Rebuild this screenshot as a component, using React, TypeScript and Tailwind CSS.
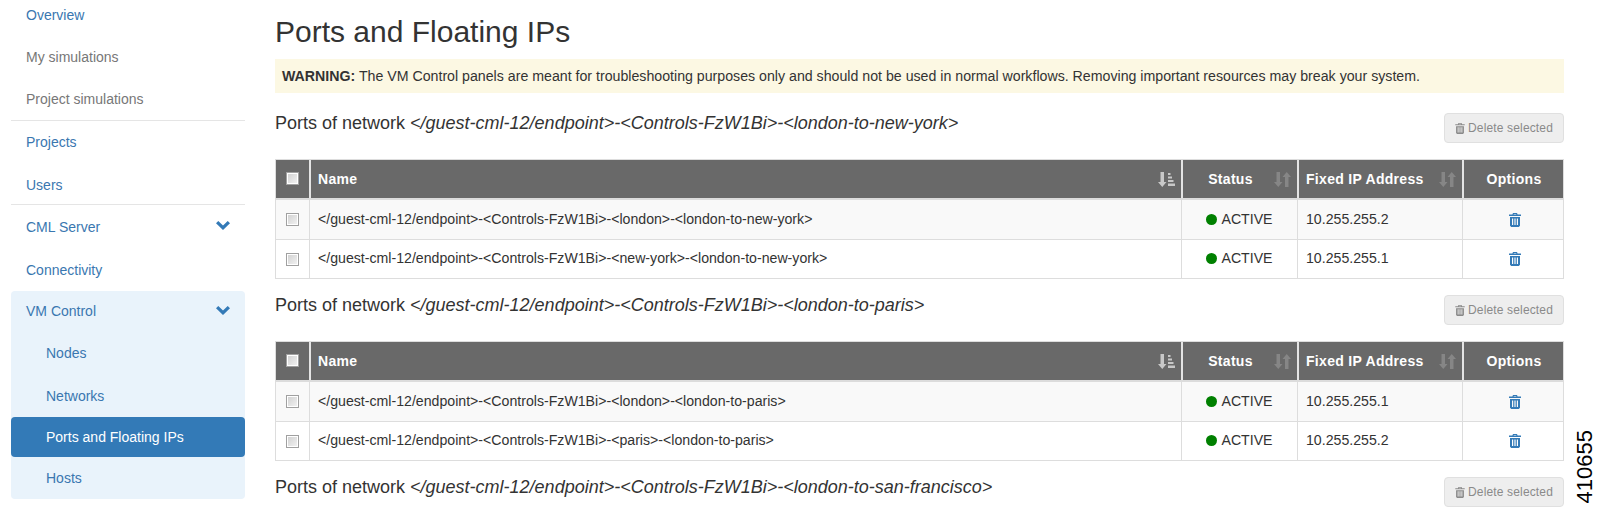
const NET = "</guest-cml-12/endpoint>-<Controls-FzW1Bi>-";

const SECTIONS = [
  {
    name: `${NET}<london-to-new-york>`,
    rows: [
      { name: `${NET}<london>-<london-to-new-york>`, ip: "10.255.255.2" },
      { name: `${NET}<new-york>-<london-to-new-york>`, ip: "10.255.255.1" },
    ],
  },
  {
    name: `${NET}<london-to-paris>`,
    rows: [
      { name: `${NET}<london>-<london-to-paris>`, ip: "10.255.255.1" },
      { name: `${NET}<paris>-<london-to-paris>`, ip: "10.255.255.2" },
    ],
  },
  { name: `${NET}<london-to-san-francisco>`, rows: [] },
];

function TrashIcon({ className }: { className?: string }) {
  return (
    <svg viewBox="0 0 12 14" className={className} fill="currentColor">
      <path fillRule="evenodd" d="M4 0h4l.6 1.500H12V3H0V1.500h3.400zM4.800 1l-.2.500h2.800L7.200 1z" />
      <path fillRule="evenodd" d="M1 4h10v8.800L9.800 14H2.200L1 12.800zM3 5.500v6.500h1.200V5.500zm2.400 0v6.500h1.200V5.500zm2.400 0v6.500H9V5.500z" />
    </svg>
  );
}

function SortIcon({ active }: { active?: boolean }) {
  if (active) {
    return (
      <svg viewBox="0 0 17 15" className="h-[15px] w-[17px] text-[#c8c8c8]" fill="currentColor">
        <path d="M2.500 0h3.500v10h2.500L4.250 15 0 10h2.500z" />
        <path d="M10 1h2.500v2H10zM10 4.500h4v2h-4zM10 8h5.500v2H10zM10 11.500h7v2.500h-7z" />
      </svg>
    );
  }
  return (
    <svg viewBox="0 0 17 15" className="h-[15px] w-[17px] text-[#868686]" fill="currentColor">
      <path d="M2.500 0h3.500v10h2.500L4.250 15 0 10h2.500z" />
      <path d="M11 15h3.500V5H17L12.750 0 8.500 5H11z" />
    </svg>
  );
}

function Chevron() {
  return (
    <svg viewBox="0 0 14 9" className="-mt-[3px] h-[9px] w-[14px] text-[#337ab7]" fill="currentColor">
      <path d="M0 2.300 2.300 0 7 4.500 11.700 0 14 2.300 7 9z" />
    </svg>
  );
}

function NavItem({
  label,
  height = "h-[42px]",
  sub,
  gray,
  active,
  chevron,
}: {
  label: string;
  height?: string;
  sub?: boolean;
  gray?: boolean;
  active?: boolean;
  chevron?: boolean;
}) {
  return (
    <div
      className={`flex ${height} items-center justify-between rounded pr-[15px] ${sub ? "pl-[35px]" : "pl-[15px]"} ${
        active ? "bg-[#337ab7] text-white" : gray ? "text-[#777]" : "text-[#3a77b0]"
      }`}
    >
      <span>{label}</span>
      {chevron && <Chevron />}
    </div>
  );
}

function Checkbox() {
  return <div className="h-[13px] w-[13px] border border-[#a0a0a0] bg-gradient-to-br from-[#cfcfcf] to-[#f4f4f4] shadow-[inset_0_0_0_1px_#fff]" />;
}

function HeadCell({ label, width, center, icon }: { label: string; width: string; center?: boolean; icon?: React.ReactNode }) {
  return (
    <div className={`flex ${width} items-center justify-between border-l-2 border-[#e4e4e4] pl-[7px] pr-[6px]`}>
      <span className={`pt-px ${center ? "flex-1 text-center" : ""} ${center && icon ? "pr-[3px]" : ""}`}>{label}</span>
      {icon}
    </div>
  );
}

function PortsSection({ name, rows }: { name: string; rows: { name: string; ip: string }[] }) {
  return (
    <section className="h-[182px]">
      <div className="flex h-[66px] items-start justify-between">
        <h3 className="pt-[20px] text-[18px] leading-[20px] text-[#333]">
          Ports of network <em>{name}</em>
        </h3>
        <button className="mt-[20px] flex h-[30px] w-[120px] items-center justify-center gap-[3px] rounded border border-[#e0e0e0] bg-[#eeeeee] text-[12px] tracking-[0.15px] text-[#8a8a8a]">
          <TrashIcon className="h-[11px] w-[10px]" />
          Delete selected
        </button>
      </div>
      {rows.length > 0 && (
        <div className="border border-[#ddd] text-[14.15px] text-[#333]">
          <div className="flex h-[40px] border-b-2 border-[#dcdcdc] bg-[#696969] text-[14px] font-bold tracking-[0.3px] text-white">
            <div className="flex w-[33px] items-center justify-center pb-[2px]">
              <Checkbox />
            </div>
            <HeadCell label="Name" width="flex-1" icon={<SortIcon active />} />
            <HeadCell label="Status" width="w-[116px]" center icon={<SortIcon />} />
            <HeadCell label="Fixed IP Address" width="w-[165px]" icon={<SortIcon />} />
            <HeadCell label="Options" width="w-[101px]" center />
          </div>
          {rows.map((r, i) => (
            <div key={r.name} className={`flex h-[39px] ${i === 0 ? "bg-[#f9f9f9]" : "border-t border-[#ddd]"}`}>
              <div className="flex w-[33px] items-center justify-center">
                <Checkbox />
              </div>
              <div className={`flex flex-1 items-center border-l border-[#ddd] px-2 ${i > 0 ? "pb-px" : ""}`}>{r.name}</div>
              <div className={`flex w-[116px] items-center justify-center gap-[4px] border-l border-[#ddd] ${i > 0 ? "pb-px" : ""}`}>
                <span className="h-[11px] w-[11px] rounded-full bg-[#008000]" />
                ACTIVE
              </div>
              <div className={`flex w-[165px] items-center border-l border-[#ddd] px-2 ${i > 0 ? "pb-px" : ""}`}>{r.ip}</div>
              <div className="flex w-[101px] items-center justify-center border-l border-[#ddd] pl-1">
                <TrashIcon className="h-[14px] w-[12px] text-[#337ab7]" />
              </div>
            </div>
          ))}
        </div>
      )}
    </section>
  );
}

export default function App() {
  return (
    <div className="relative flex h-[509px] overflow-hidden bg-white font-['Liberation_Sans',Arial,sans-serif] text-[14px]">
      {/* Sidebar */}
      <nav className="ml-[11px] w-[234px] shrink-0 -mt-[6px]">
        <NavItem label="Overview" />
        <NavItem label="My simulations" gray />
        <NavItem label="Project simulations" gray />
        <div className="border-t border-[#e5e5e5]" />
        <NavItem label="Projects" />
        <NavItem label="Users" height="h-[41px] pt-[3px]" />
        <div className="border-t border-[#e5e5e5]" />
        <NavItem label="CML Server" height="h-[44px]" chevron />
        <NavItem label="Connectivity" />
        <div className="rounded bg-[#e9f3fb]">
          <NavItem label="VM Control" height="h-[41px]" chevron />
          <NavItem label="Nodes" height="h-[43px]" sub />
          <NavItem label="Networks" sub />
          <NavItem label="Ports and Floating IPs" height="h-[40px]" sub active />
          <NavItem label="Hosts" sub />
        </div>
      </nav>

      {/* Main */}
      <main className="ml-[30px] w-[1289px] shrink-0">
        <h1 className="h-[59px] pt-[14px] text-[30px] leading-[36px] text-[#333]">Ports and Floating IPs</h1>
        <div className="flex h-[34px] items-center bg-[#fcf8e3] px-[7px] pt-px text-[14.18px] text-[#333]">
          <span>
            <strong>WARNING:</strong> The VM Control panels are meant for troubleshooting purposes only and should not be used in normal workflows. Removing important resources may break your system.
          </span>
        </div>
        {SECTIONS.map((s) => (
          <PortsSection key={s.name} name={s.name} rows={s.rows} />
        ))}
      </main>

      <div className="absolute bottom-[6px] left-[1574px] rotate-180 text-[22px] leading-[22px] text-black [writing-mode:vertical-rl]">410655</div>
    </div>
  );
}
